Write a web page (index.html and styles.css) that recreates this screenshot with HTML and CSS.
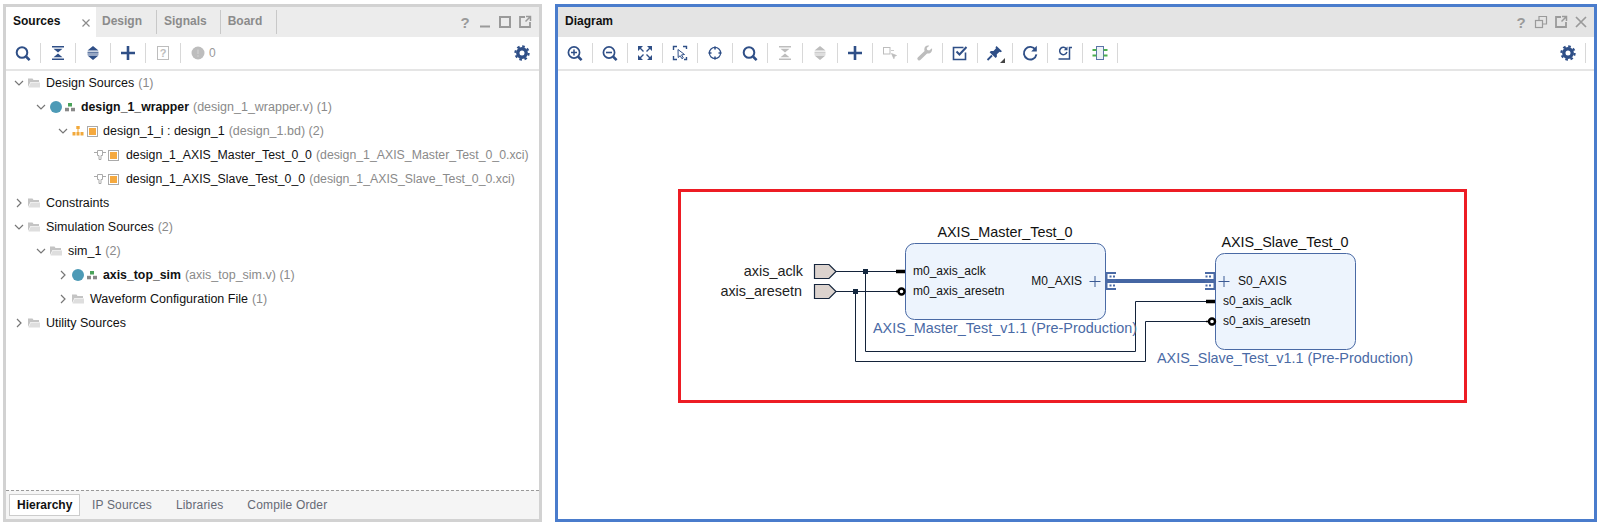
FILE: index.html
```html
<!DOCTYPE html>
<html lang="en">
<head>
    <meta charset="UTF-8">
    <title>Block Design</title>
    <link rel="stylesheet" href="styles.css">
</head>
<body>
    <!-- shared icons -->
    <svg class="icon-defs">
        <symbol id="i-search" viewBox="0 0 20 20"><circle cx="9" cy="9.500" r="5.300" fill="none" stroke="currentColor" stroke-width="2"/><path d="M13 13.500l3.600 3.600" stroke="currentColor" stroke-width="2.600" fill="none"/></symbol>
        <symbol id="i-zoomin" viewBox="0 0 20 20"><circle cx="9" cy="9.500" r="5.600" fill="none" stroke="currentColor" stroke-width="1.700"/><path d="M6 9.500h6M9 6.500v6" stroke="currentColor" stroke-width="1.500"/><path d="M13 13.500l3.600 3.600" stroke="currentColor" stroke-width="2.600"/></symbol>
        <symbol id="i-zoomout" viewBox="0 0 20 20"><circle cx="9" cy="9.500" r="5.600" fill="none" stroke="currentColor" stroke-width="1.700"/><path d="M6 9.500h6" stroke="currentColor" stroke-width="1.600"/><path d="M13 13.500l3.600 3.600" stroke="currentColor" stroke-width="2.600"/></symbol>
        <symbol id="i-fit" viewBox="0 0 20 20"><path d="M3 3h5L3 8zM17 3v5l-5-5zM3 17v-5l5 5zM17 17h-5l5-5z" fill="currentColor"/><path d="M5 5l3.500 3.500M15 5l-3.500 3.500M5 15l3.500-3.500M15 15l-3.500-3.500" stroke="currentColor" stroke-width="1.400"/></symbol>
        <symbol id="i-area" viewBox="0 0 20 20"><path d="M3.500 7V3.500H7M13 3.500h3.500V6M3.500 13v3.500H7M16.500 14v2.500H14" fill="none" stroke="currentColor" stroke-width="1.400"/><path d="M8 6.500l6.500 5-3 .4 1.800 3-1.400.8-1.700-3-2 1.800z" fill="#fff" stroke="currentColor" stroke-width="1"/></symbol>
        <symbol id="i-target" viewBox="0 0 20 20"><circle cx="10" cy="10" r="5.600" fill="none" stroke="currentColor" stroke-width="1.200"/><path d="M10 3.500v3M10 13.500v3M3.500 10h3M13.500 10h3" stroke="currentColor" stroke-width="1.600"/></symbol>
        <symbol id="i-collapse" viewBox="0 0 20 20"><path d="M4 3h12v1.400H4zM4 15.600h12V17H4z" fill="currentColor"/><path d="M5.500 5.800h9L10 9.600zM5.500 14.200h9L10 10.400z" fill="currentColor"/></symbol>
        <symbol id="i-expand" viewBox="0 0 20 20"><path d="M10 3l5.500 4.600h-11zM10 17l5.500-4.600h-11z" fill="currentColor"/><path d="M4.500 8.800h11v1h-11zM4.500 10.400h11v1h-11z" fill="currentColor"/></symbol>
        <symbol id="i-plus" viewBox="0 0 20 20"><path d="M3 10h14M10 3v14" stroke="currentColor" stroke-width="2.600"/></symbol>
        <symbol id="i-help" viewBox="0 0 20 20"><rect x="4.500" y="3.500" width="11" height="13" fill="none" stroke="currentColor"/><text x="10" y="14" text-anchor="middle" class="svg-small" fill="currentColor">?</text></symbol>
        <symbol id="i-alert" viewBox="0 0 20 20"><circle cx="10" cy="10" r="6.500" fill="currentColor"/><path d="M10 6.500v4.500M10 12.300v1.400" stroke="#cfcfcf" stroke-width="1.400"/></symbol>
        <symbol id="i-gear" viewBox="0 0 20 20"><circle cx="10" cy="10" r="4.200" fill="none" stroke="currentColor" stroke-width="3.400"/><circle cx="10" cy="10" r="6.600" fill="none" stroke="currentColor" stroke-width="2.200" stroke-dasharray="2.600 2.580"/></symbol>
        <symbol id="i-route" viewBox="0 0 20 20"><rect x="3.500" y="4.500" width="6.500" height="6.500" fill="none" stroke="currentColor"/><path d="M11 7.500h3M11.500 10.500l5 2-2 .8-.6 2.400z" fill="currentColor" stroke="currentColor" stroke-width=".8"/></symbol>
        <symbol id="i-wrench" viewBox="0 0 20 20"><path d="M17 5.200l-2.800 2.400-2-.6-.5-2.100L14.300 2.700c-2.700-.8-5 1-5 3.700 0 .6.100 1.100.3 1.500L3 14.200c-1 1-.8 2 0 2.700.8.700 1.800.7 2.600-.1l6.500-6.400c3 .9 5.600-1.900 4.900-5.200z" fill="currentColor"/></symbol>
        <symbol id="i-check" viewBox="0 0 20 20"><path d="M15.500 9.500v7h-12v-12h10" fill="none" stroke="currentColor" stroke-width="1.600"/><path d="M6.500 8.500l3 3 7-7.500" fill="none" stroke="currentColor" stroke-width="2"/></symbol>
        <symbol id="i-pin" viewBox="0 0 20 20"><path d="M11.500 3l5.500 5.200-1.400 1-1-.5-2.800 2.500.1 2.500-1.300 1.300-6-5.800 1.300-1.300 2.600.1 2.500-2.700-.5-1z" fill="currentColor"/><path d="M7 12.500l-4.500 4.500" stroke="currentColor" stroke-width="1.800"/><path d="M20 15v5h-5z" fill="#444"/></symbol>
        <symbol id="i-refresh" viewBox="0 0 20 20"><path d="M15.500 6.800a6.300 6.300 0 1 0 .9 4.500" fill="none" stroke="currentColor" stroke-width="1.900"/><path d="M16.800 2.800v5.600h-5.600z" fill="currentColor"/></symbol>
        <symbol id="i-regen" viewBox="0 0 20 20"><path d="M11.500 6a3.700 3.700 0 1 0 .4 3" fill="none" stroke="currentColor" stroke-width="1.500"/><path d="M12.500 3.500v3.800H8.800z" fill="currentColor"/><path d="M17 4.500h-2.500v11.500H3.500" fill="none" stroke="currentColor" stroke-width="1.500"/></symbol>
        <symbol id="i-chip" viewBox="0 0 20 20"><rect x="6.500" y="3.500" width="7" height="13" fill="#eef2f8" stroke="#5b75a8"/><path d="M2.500 7h4M13.500 7h4M2.500 12.500h4M13.500 12.500h4" stroke="#4cb050" stroke-width="1.800"/></symbol>
        <symbol id="i-min" viewBox="0 0 20 20"><path d="M5 14.500h10" stroke="currentColor" stroke-width="2"/></symbol>
        <symbol id="i-max" viewBox="0 0 20 20"><rect x="5" y="5" width="10" height="10" fill="none" stroke="currentColor" stroke-width="2"/></symbol>
        <symbol id="i-float" viewBox="0 0 20 20"><path d="M10 5H5v10h10v-5" fill="none" stroke="currentColor" stroke-width="1.800"/><path d="M10.500 9.500L15 5M11 4.500h4.500V9" fill="none" stroke="currentColor" stroke-width="1.500"/></symbol>
        <symbol id="i-restore" viewBox="0 0 20 20"><rect x="4.500" y="8.500" width="7" height="7" fill="none" stroke="currentColor" stroke-width="1.200"/><path d="M8 8V4.500h7.500V12H12" fill="none" stroke="currentColor" stroke-width="1.200"/></symbol>
        <symbol id="i-close" viewBox="0 0 20 20"><path d="M5 5l10 10M15 5L5 15" stroke="currentColor" stroke-width="1.700"/></symbol>
        <symbol id="i-open" viewBox="0 0 12 12"><path d="M2 4l4 4 4-4" fill="none" stroke="#777" stroke-width="1.200"/></symbol>
        <symbol id="i-shut" viewBox="0 0 12 12"><path d="M4 2l4 4-4 4" fill="none" stroke="#777" stroke-width="1.200"/></symbol>
        <symbol id="i-folder" viewBox="0 0 12 12"><path d="M0 1.500h4.500l1 1.500H11v2H2.500L0 10z" fill="#c4c4c4"/><path d="M.5 10.500L2.800 5.500H12v5z" fill="#dedede"/></symbol>
        <symbol id="i-dot" viewBox="0 0 12 12"><circle cx="6" cy="6" r="6" fill="#4d9ab6"/></symbol>
        <symbol id="i-hier" viewBox="0 0 10 10"><rect x="3" y="1" width="4" height="3.500" fill="#4aa35a"/><rect x="0" y="5.800" width="4" height="3.500" fill="#888"/><rect x="6" y="5.800" width="4" height="3.500" fill="#888"/></symbol>
        <symbol id="i-bd" viewBox="0 0 12 12"><rect x="4.300" y="1" width="3.400" height="3" fill="#f2a93b"/><rect x=".5" y="7" width="3" height="3.500" fill="#f2a93b"/><rect x="4.500" y="7" width="3" height="3.500" fill="#f2a93b"/><rect x="8.500" y="7" width="3" height="3.500" fill="#f2a93b"/><path d="M6 4v3" stroke="#f2a93b"/></symbol>
        <symbol id="i-box" viewBox="0 0 11 11"><rect x=".5" y=".5" width="10" height="10" fill="#fff" stroke="#aaa"/><rect x="2.500" y="2.500" width="6" height="6" fill="#f5a93f" stroke="#f5a93f"/></symbol>
        <symbol id="i-conn" viewBox="0 0 12 12"><path d="M3.500 1.500h5v5h-1.500v4h-2v-4h-1.500zM0 3.500h3.500M8.500 3.500h3.500" fill="#fff" stroke="#aaa"/></symbol>
    </svg>

    <div class="layout">
        <section class="panel panel-sources">
            <div class="panel-head">
                <div class="tab tab-active">Sources<svg class="tab-close"><use href="#i-close"/></svg></div>
                <div class="tab tab-wide">Design</div>
                <div class="tab">Signals</div>
                <div class="tab tab-wide">Board</div>
                <div class="head-tools">
                    <span class="head-help">?</span>
                    <svg class="head-icon"><use href="#i-min"/></svg>
                    <svg class="head-icon"><use href="#i-max"/></svg>
                    <svg class="head-icon"><use href="#i-float"/></svg>
                </div>
            </div>
            <div class="toolbar">
                <span class="tool"><svg class="tool-icon"><use href="#i-search"/></svg></span><span class="sep"></span>
                <span class="tool"><svg class="tool-icon"><use href="#i-collapse"/></svg></span><span class="sep"></span>
                <span class="tool"><svg class="tool-icon"><use href="#i-expand"/></svg></span><span class="sep"></span>
                <span class="tool"><svg class="tool-icon"><use href="#i-plus"/></svg></span><span class="sep"></span>
                <span class="tool off"><svg class="tool-icon"><use href="#i-help"/></svg></span><span class="sep"></span>
                <span class="tool off alert"><svg class="tool-icon"><use href="#i-alert"/></svg><span class="alert-count">0</span></span>
                <span class="tool tool-end"><svg class="tool-icon"><use href="#i-gear"/></svg></span>
            </div>
            <div class="tree">
                <div class="row lv0"><svg class="chev"><use href="#i-open"/></svg><svg class="ic-folder"><use href="#i-folder"/></svg><span class="name">Design Sources</span><span class="dim">(1)</span></div>
                <div class="row lv1"><svg class="chev"><use href="#i-open"/></svg><svg class="ic-dot"><use href="#i-dot"/></svg><svg class="ic-hier"><use href="#i-hier"/></svg><b class="name">design_1_wrapper</b><span class="dim">(design_1_wrapper.v) (1)</span></div>
                <div class="row lv2"><svg class="chev"><use href="#i-open"/></svg><svg class="ic-bd"><use href="#i-bd"/></svg><svg class="ic-box"><use href="#i-box"/></svg><span class="name">design_1_i : design_1</span><span class="dim">(design_1.bd) (2)</span></div>
                <div class="row lv3"><svg class="ic-conn"><use href="#i-conn"/></svg><svg class="ic-box"><use href="#i-box"/></svg><span class="name">design_1_AXIS_Master_Test_0_0</span><span class="dim">(design_1_AXIS_Master_Test_0_0.xci)</span></div>
                <div class="row lv3"><svg class="ic-conn"><use href="#i-conn"/></svg><svg class="ic-box"><use href="#i-box"/></svg><span class="name">design_1_AXIS_Slave_Test_0_0</span><span class="dim">(design_1_AXIS_Slave_Test_0_0.xci)</span></div>
                <div class="row lv0"><svg class="chev"><use href="#i-shut"/></svg><svg class="ic-folder"><use href="#i-folder"/></svg><span class="name">Constraints</span></div>
                <div class="row lv0"><svg class="chev"><use href="#i-open"/></svg><svg class="ic-folder"><use href="#i-folder"/></svg><span class="name">Simulation Sources</span><span class="dim">(2)</span></div>
                <div class="row lv1"><svg class="chev"><use href="#i-open"/></svg><svg class="ic-folder"><use href="#i-folder"/></svg><span class="name">sim_1</span><span class="dim">(2)</span></div>
                <div class="row lv2"><svg class="chev"><use href="#i-shut"/></svg><svg class="ic-dot"><use href="#i-dot"/></svg><svg class="ic-hier"><use href="#i-hier"/></svg><b class="name">axis_top_sim</b><span class="dim">(axis_top_sim.v) (1)</span></div>
                <div class="row lv2"><svg class="chev"><use href="#i-shut"/></svg><svg class="ic-folder"><use href="#i-folder"/></svg><span class="name">Waveform Configuration File</span><span class="dim">(1)</span></div>
                <div class="row lv0"><svg class="chev"><use href="#i-shut"/></svg><svg class="ic-folder"><use href="#i-folder"/></svg><span class="name">Utility Sources</span></div>
            </div>
            <div class="bottom-tabs">
                <span class="btab btab-active">Hierarchy</span>
                <span class="btab">IP Sources</span>
                <span class="btab">Libraries</span>
                <span class="btab">Compile Order</span>
            </div>
        </section>

        <section class="panel panel-diagram">
            <div class="panel-head">
                <div class="diagram-title">Diagram</div>
                <div class="head-tools">
                    <span class="head-help">?</span>
                    <svg class="head-icon"><use href="#i-restore"/></svg>
                    <svg class="head-icon"><use href="#i-float"/></svg>
                    <svg class="head-icon"><use href="#i-close"/></svg>
                </div>
            </div>
            <div class="toolbar">
                <span class="tool"><svg class="tool-icon"><use href="#i-zoomin"/></svg></span><span class="sep"></span>
                <span class="tool"><svg class="tool-icon"><use href="#i-zoomout"/></svg></span><span class="sep"></span>
                <span class="tool"><svg class="tool-icon"><use href="#i-fit"/></svg></span><span class="sep"></span>
                <span class="tool"><svg class="tool-icon"><use href="#i-area"/></svg></span><span class="sep"></span>
                <span class="tool"><svg class="tool-icon"><use href="#i-target"/></svg></span><span class="sep"></span>
                <span class="tool"><svg class="tool-icon"><use href="#i-search"/></svg></span><span class="sep"></span>
                <span class="tool off"><svg class="tool-icon"><use href="#i-collapse"/></svg></span><span class="sep"></span>
                <span class="tool off"><svg class="tool-icon"><use href="#i-expand"/></svg></span><span class="sep"></span>
                <span class="tool"><svg class="tool-icon"><use href="#i-plus"/></svg></span><span class="sep"></span>
                <span class="tool off"><svg class="tool-icon"><use href="#i-route"/></svg></span><span class="sep"></span>
                <span class="tool off"><svg class="tool-icon"><use href="#i-wrench"/></svg></span><span class="sep"></span>
                <span class="tool"><svg class="tool-icon"><use href="#i-check"/></svg></span><span class="sep"></span>
                <span class="tool"><svg class="tool-icon"><use href="#i-pin"/></svg></span><span class="sep"></span>
                <span class="tool"><svg class="tool-icon"><use href="#i-refresh"/></svg></span><span class="sep"></span>
                <span class="tool"><svg class="tool-icon"><use href="#i-regen"/></svg></span><span class="sep"></span>
                <span class="tool"><svg class="tool-icon"><use href="#i-chip"/></svg></span><span class="sep"></span>
                <span class="tool tool-end"><svg class="tool-icon"><use href="#i-gear"/></svg></span><span class="sep"></span>
            </div>
            <!-- viewBox uses page coordinates so the numbers read off the screen directly -->
            <svg class="canvas" viewBox="558 71 1036 448">
                <rect class="mark" x="679.500" y="190.500" width="786" height="211"/>

                <text class="port-name" x="803" y="276" text-anchor="end">axis_aclk</text>
                <text class="port-name" x="802" y="296" text-anchor="end">axis_aresetn</text>
                <path class="port" d="M814.500 264.500H829L836 271.500L829 278.500H814.500Z"/>
                <path class="port" d="M814.500 284.500H829L836 291.500L829 298.500H814.500Z"/>

                <path class="wire" d="M836 271.500H905M836 291.500H905"/>
                <path class="wire" d="M865.500 271.500V351.500H1135.500V301.500H1215"/>
                <path class="wire" d="M855.500 291.500V361.500H1145.500V321.500H1215"/>
                <rect class="junction" x="863" y="269" width="5" height="5"/>
                <rect class="junction" x="853" y="289" width="5" height="5"/>
                <rect class="bus" x="1115" y="279" width="91" height="4"/>

                <rect class="block" x="905.500" y="243.500" width="200" height="76" rx="9"/>
                <rect class="block" x="1215.500" y="253.500" width="140" height="96" rx="9"/>

                <path class="stub" d="M896 271.500H905M1206 301.500H1215"/>
                <path class="stub-thin" d="M896 291.500H899M1206 321.500H1209"/>
                <circle class="bubble" cx="901.500" cy="291.500" r="3"/>
                <circle class="bubble" cx="1212" cy="321.500" r="3"/>

                <path class="bus-pin" d="M1106 272h10v2h-10zM1106 279h10v4h-10zM1106 288h10v2h-10zM1106 274h1.500v14H1106zM1109.500 275.500h2v2h-2zM1113 275.500h2v2h-2zM1109.500 284.500h2v2h-2zM1113 284.500h2v2h-2z"/>
                <path class="bus-pin" d="M1205 272h10v2h-10zM1205 279h10v4h-10zM1205 288h10v2h-10zM1213.500 274h1.500v14h-1.500zM1205.500 275.500h2v2h-2zM1209 275.500h2v2h-2zM1205.500 284.500h2v2h-2zM1209 284.500h2v2h-2z"/>
                <path class="expand" d="M1089.500 281.500h11M1095 276v11M1218.500 281.500h11M1224 276v11"/>

                <text class="block-title" x="1005" y="237" text-anchor="middle">AXIS_Master_Test_0</text>
                <text class="pin" x="913" y="275">m0_axis_aclk</text>
                <text class="pin" x="913" y="295">m0_axis_aresetn</text>
                <text class="pin" x="1082" y="285" text-anchor="end">M0_AXIS</text>
                <text class="block-foot" x="873" y="333">AXIS_Master_Test_v1.1 (Pre-Production)</text>

                <text class="block-title" x="1285" y="247" text-anchor="middle">AXIS_Slave_Test_0</text>
                <text class="pin" x="1238" y="285">S0_AXIS</text>
                <text class="pin" x="1223" y="305">s0_axis_aclk</text>
                <text class="pin" x="1223" y="325">s0_axis_aresetn</text>
                <text class="block-foot" x="1157" y="363">AXIS_Slave_Test_v1.1 (Pre-Production)</text>
            </svg>
        </section>
    </div>
</body>
</html>
```

FILE: styles.css
```css
html, body {
    margin: 0;
    height: 100%;
    background-color: #fff;
    overflow: hidden;
}

body {
    font-family: "Liberation Sans", Arial, sans-serif;
    font-size: 12.5px;
    color: #111;
}

.icon-defs {
    display: none;
}

svg {
    flex-shrink: 0;
}

.layout {
    display: flex;
    gap: 13px;
    padding: 4px 3px;
    height: 518px;
}

.panel {
    display: flex;
    flex-direction: column;
    border: 3px solid #d2d2d2;
}

.panel-sources {
    width: 533px;
}

.panel-diagram {
    flex: 1;
    border-color: #4a7ccc;
}

/* header with tabs */
.panel-head {
    display: flex;
    align-items: center;
    height: 30px;
    background-color: #ececec;
    font-size: 12px;
    font-weight: bold;
}

.panel-diagram .panel-head {
    background-color: #e4e4e4;
}

.tab {
    position: relative;
    display: flex;
    align-items: center;
    height: 30px;
    box-sizing: border-box;
    padding: 0 14px 2px 7px;
    color: #8b8b8b;
}

.tab-wide {
    padding-right: 15px;
}

.tab::after {
    content: "";
    position: absolute;
    right: 0;
    top: 3px;
    height: 24px;
    width: 1px;
    background-color: #c8c8c8;
}

.tab-active {
    width: 90px;
    background-color: #fff;
    color: #111;
}

.tab-active::after {
    display: none;
}

.tab-active + .tab {
    padding-left: 6px;
}

.tab-close {
    position: absolute;
    left: 73px;
    top: 9px;
    width: 14px;
    height: 14px;
    color: #8b8b8b;
}

.diagram-title {
    padding: 0 0 2px 7px;
    color: #111;
}

.head-tools {
    display: flex;
    align-items: center;
    margin-left: auto;
    padding-right: 4px;
    color: #9a9a9a;
}

.panel-diagram .head-tools {
    padding-right: 3px;
}

.head-help {
    width: 20px;
    text-align: center;
    font-size: 15px;
    color: #9a9a9a;
}

.head-icon {
    width: 20px;
    height: 20px;
}

/* toolbars */
.toolbar {
    display: flex;
    align-items: center;
    height: 32px;
    border-bottom: 2px solid #e5e5e5;
    background-color: #fff;
    color: #2f4f87;
}

.panel-diagram .toolbar {
    padding-right: 8px;
}

.tool {
    display: flex;
    align-items: center;
    justify-content: center;
    width: 34px;
    height: 32px;
}

.tool.off {
    color: #bdbdbd;
}

.tool-icon {
    width: 20px;
    height: 20px;
}

.tool-end {
    margin-left: auto;
}

.sep {
    width: 1px;
    height: 20px;
    background-color: #d8d8d8;
}

.alert {
    width: 48px;
    justify-content: flex-start;
    padding-left: 7px;
    box-sizing: border-box;
}

.alert-count {
    margin-left: 1px;
    font-size: 12px;
    color: #999;
}

.svg-small {
    font-size: 11px;
    font-weight: bold;
}

/* tree */
.tree {
    flex: 1;
}

.row {
    display: flex;
    align-items: center;
    height: 24px;
    white-space: pre;
}

.lv0 { padding-left: 7px; }
.lv1 { padding-left: 29px; }
.lv2 { padding-left: 51px; }

.lv3 {
    padding-left: 88px;
    font-size: 12.3px;
}

.row b {
    font-size: 12.3px;
}

.chev {
    width: 12px;
    height: 12px;
    margin-right: 3px;
}

.ic-folder {
    width: 12px;
    height: 12px;
    margin-right: 6px;
}

.ic-dot {
    width: 12px;
    height: 12px;
    margin-right: 3px;
}

.ic-hier {
    width: 10px;
    height: 10px;
    margin-right: 6px;
}

.ic-bd {
    width: 12px;
    height: 12px;
    margin-right: 3px;
}

.ic-conn {
    width: 12px;
    height: 12px;
    margin-right: 2px;
}

.ic-box {
    width: 11px;
    height: 11px;
    margin-right: 5px;
}

.lv3 .ic-box {
    margin-right: 7px;
}

.dim {
    color: #8a8a8a;
    margin-left: 4px;
}

/* tabs under the tree */
.bottom-tabs {
    display: flex;
    align-items: center;
    height: 29px;
    box-sizing: border-box;
    padding-left: 3px;
    border-top: 1px dashed #999;
    background-color: #f5f5f5;
    font-size: 12px;
    letter-spacing: 0.15px;
    color: #666a75;
}

.btab {
    padding: 0 12px;
}

.btab-active {
    display: flex;
    align-items: center;
    box-sizing: border-box;
    height: 22px;
    width: 71px;
    padding: 0 0 0 7px;
    border: 1px solid #ccc;
    background-color: #fff;
    font-weight: bold;
    letter-spacing: 0;
    color: #111;
}

/* block design canvas */
.canvas {
    display: block;
    flex: 1;
    width: 100%;
    min-height: 0;
    background-color: #fff;
}

.mark {
    fill: none;
    stroke: #ed1c24;
    stroke-width: 3;
}

.port-name {
    font-size: 14.4px;
    fill: #222;
}

.port {
    fill: #dcd3ce;
    stroke: #16263d;
    stroke-width: 1.2;
}

.wire {
    fill: none;
    stroke: #14233a;
    stroke-width: 1;
}

.junction {
    fill: #14283f;
}

.bus {
    fill: #4566a3;
}

.block {
    fill: #edf4fd;
    stroke: #4a6aa5;
    stroke-width: 1;
}

.stub {
    stroke: #000;
    stroke-width: 3.5;
}

.stub-thin {
    stroke: #000;
    stroke-width: 1.5;
}

.bubble {
    fill: #fff;
    stroke: #000;
    stroke-width: 2.4;
}

.bus-pin {
    fill: #4a6aa5;
}

.expand {
    stroke: #3b5a94;
    stroke-width: 1;
}

.block-title {
    font-size: 14.4px;
    fill: #111;
}

.pin {
    font-size: 12px;
    fill: #111;
}

.block-foot {
    font-size: 14.4px;
    fill: #4a6aa5;
}
```
